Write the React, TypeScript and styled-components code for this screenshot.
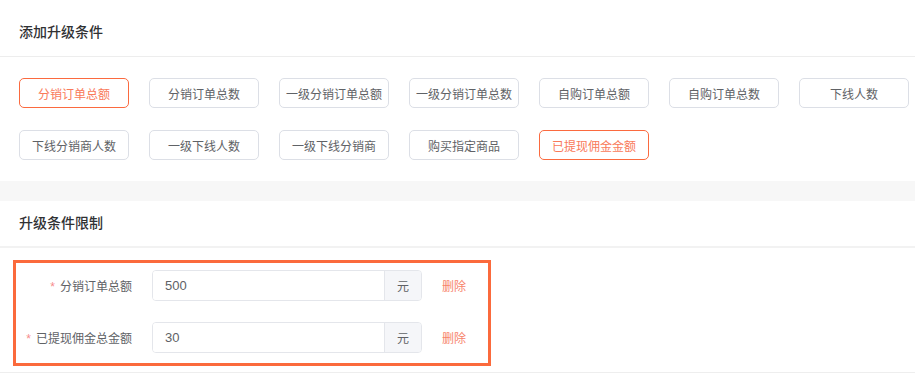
import styled, { createGlobalStyle } from 'styled-components'

const GlobalStyle = createGlobalStyle`
  html, body {
    margin: 0;
    padding: 0;
    background: #ffffff;
  }
  body {
    font-family: "Helvetica Neue", "Liberation Sans", "Noto Sans CJK SC", sans-serif;
    color: #303133;
  }
  * {
    box-sizing: border-box;
  }
`

const conditions = [
  '分销订单总额',
  '分销订单总数',
  '一级分销订单总额',
  '一级分销订单总数',
  '自购订单总额',
  '自购订单总数',
  '下线人数',
  '下线分销商人数',
  '一级下线人数',
  '一级下线分销商',
  '购买指定商品',
  '已提现佣金金额',
]

const selected = ['分销订单总额', '已提现佣金金额']

const limits = [
  { label: '分销订单总额', value: '500' },
  { label: '已提现佣金总金额', value: '30' },
]

export default function App() {
  return (
    <Page>
      <GlobalStyle />
      <Section>
        <SectionHeader top={22} bottom={14}>添加升级条件</SectionHeader>
        <ConditionGrid>
          {conditions.map((name) => (
            <ConditionButton key={name} active={selected.includes(name)}>
              {name}
            </ConditionButton>
          ))}
        </ConditionGrid>
      </Section>
      <Band />
      <Section>
        <SectionHeader top={12} bottom={13} thick>
          升级条件限制
        </SectionHeader>
        <LimitArea>
          <Highlight>
            {limits.map((item) => (
              <FormRow key={item.label}>
                <Label>
                  <Star>*</Star>
                  {item.label}
                </Label>
                <InputGroup>
                  <Input defaultValue={item.value} />
                  <Addon>元</Addon>
                </InputGroup>
                <DeleteLink>删除</DeleteLink>
              </FormRow>
            ))}
          </Highlight>
        </LimitArea>
      </Section>
    </Page>
  )
}

const Page = styled.div`
  width: 915px;
  min-height: 373px;
  background: #ffffff;
`

const Section = styled.section`
  background: #ffffff;
`

const SectionHeader = styled.div<{ top: number; bottom: number; thick?: boolean }>`
  padding: ${(p) => p.top}px 19px ${(p) => p.bottom}px;
  font-size: 14px;
  line-height: 20px;
  font-weight: 500;
  color: #303133;
  border-bottom: ${(p) => (p.thick ? '2px solid #f2f2f2' : '1px solid #ededed')};
`

const ConditionGrid = styled.div`
  display: flex;
  flex-wrap: wrap;
  gap: 22px 20px;
  padding: 21px 0 21px 19px;
`

const ConditionButton = styled.button<{ active: boolean }>`
  width: 110px;
  height: 30px;
  padding: 0;
  border-radius: 5px;
  background: #ffffff;
  border: 1px solid ${(p) => (p.active ? '#fb6a3f' : '#dcdfe6')};
  color: ${(p) => (p.active ? '#f97a5a' : '#606266')};
  font-family: inherit;
  font-size: 12px;
  text-align: center;
  cursor: pointer;
`

const Band = styled.div`
  height: 20px;
  background: #f7f7f7;
`

const LimitArea = styled.div`
  padding: 12px 0 6px 13px;
  border-bottom: 1px solid #eeeeee;
`

const Highlight = styled.div`
  display: inline-flex;
  flex-direction: column;
  gap: 21px;
  padding: 7px 22px 10px 0;
  border: 3px solid #fb6a3c;
`

const FormRow = styled.div`
  display: flex;
  align-items: center;
`

const Label = styled.label`
  width: 136px;
  padding-right: 20px;
  text-align: right;
  font-size: 12px;
  color: #606266;
  white-space: nowrap;
`

const Star = styled.span`
  color: #f78c8c;
  margin-right: 5px;
`

const InputGroup = styled.div`
  display: flex;
  width: 270px;
  height: 31px;
  border: 1px solid #e4e6eb;
  border-radius: 4px;
  overflow: hidden;
`

const Input = styled.input`
  flex: 1;
  min-width: 0;
  border: none;
  outline: none;
  padding: 0 12px;
  font-family: inherit;
  font-size: 13px;
  color: #606266;
  background: #ffffff;
`

const Addon = styled.span`
  width: 37px;
  display: flex;
  align-items: center;
  justify-content: center;
  background: #f5f6f9;
  border-left: 1px solid #e4e6eb;
  font-size: 12px;
  color: #606266;
`

const DeleteLink = styled.span`
  margin-left: 20px;
  font-size: 12px;
  color: #f7836a;
  cursor: pointer;
`
